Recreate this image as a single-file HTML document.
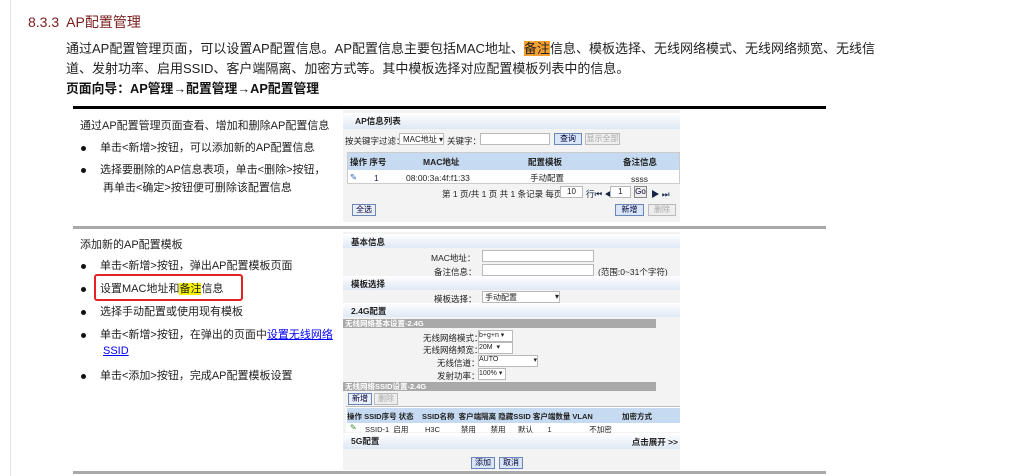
<!DOCTYPE html>
<html><head><meta charset="utf-8"><style>
*{margin:0;padding:0;box-sizing:border-box}
body{width:1016px;height:476px;background:#fff;position:relative;overflow:hidden;font-family:"Liberation Sans","Noto Sans CJK SC",sans-serif;color:#222}
.a{position:absolute;white-space:nowrap}
.t{font-size:11px;color:#222}
.dot{position:absolute;width:5px;height:5px;border-radius:50%;background:#111}
.p{position:absolute;background:#f3f3f3;font-size:8.5px;color:#222}
.hd{position:absolute;left:0;right:0;height:14px;background:linear-gradient(#ffffff,#dfe8f5);font-weight:bold;font-size:8.5px;padding:2px 0 0 8px}
.in{position:absolute;background:#fff;border:1px solid #b9b9b9;height:12px}
.btn{position:absolute;height:12px;border:1px solid #6a87b8;background:#d8e6f8;font-size:8px;text-align:center;line-height:10px;color:#003}
.gb{position:absolute;left:0;width:313px;height:9px;background:#a9a9a9;color:#fff;font-size:7.5px;font-weight:bold;line-height:9px;padding-left:2px}
</style></head><body>
<div class="a" style="left:10px;top:0;width:1px;height:476px;background:#e2e2e2"></div>
<div class="a" style="left:28px;top:12px;font-size:14px;color:#7a1c1c">8.3.3&nbsp; AP配置管理</div>
<div class="a" style="left:66px;top:38px;font-size:13px;color:#222">通过AP配置管理页面，可以设置AP配置信息。AP配置信息主要包括MAC地址、<span style="background:#f5a031">备注</span>信息、模板选择、无线网络模式、无线网络频宽、无线信</div>
<div class="a" style="left:66px;top:58px;font-size:13px;color:#222">道、发射功率、启用SSID、客户端隔离、加密方式等。其中模板选择对应配置模板列表中的信息。</div>
<div class="a" style="left:66px;top:78px;font-size:12.8px;font-weight:bold;color:#111">页面向导：AP管理→配置管理→AP配置管理</div>
<div class="a" style="left:73px;top:106px;width:753px;height:3px;background:#000"></div>
<div class="a" style="left:73px;top:226px;width:753px;height:3px;background:#a9a9a9"></div>
<div class="a" style="left:73px;top:471px;width:753px;height:3px;background:#a9a9a9"></div>

<div class="a t" style="left:80px;top:117px">通过AP配置管理页面查看、增加和删除AP配置信息</div>
<div class="dot" style="left:81px;top:146px"></div><div class="a t" style="left:100px;top:139px">单击&lt;新增&gt;按钮，可以添加新的AP配置信息</div>
<div class="dot" style="left:81px;top:168px"></div><div class="a t" style="left:100px;top:161px">选择要删除的AP信息表项，单击&lt;删除&gt;按钮，</div>
<div class="a t" style="left:103px;top:179px">再单击&lt;确定&gt;按钮便可删除该配置信息</div>

<div class="a t" style="left:80px;top:236px">添加新的AP配置模板</div>
<div class="dot" style="left:81px;top:264px"></div><div class="a t" style="left:100px;top:257px">单击&lt;新增&gt;按钮，弹出AP配置模板页面</div>
<div class="a" style="left:94px;top:274px;width:149px;height:27px;border:2px solid #e52222;border-radius:3px"></div>
<div class="dot" style="left:81px;top:287px"></div><div class="a t" style="left:100px;top:280px">设置MAC地址和<span style="background:#f8f400">备注</span>信息</div>
<div class="dot" style="left:81px;top:310px"></div><div class="a t" style="left:100px;top:303px">选择手动配置或使用现有模板</div>
<div class="dot" style="left:81px;top:333px"></div><div class="a t" style="left:100px;top:326px">单击&lt;新增&gt;按钮，在弹出的页面中<span style="color:#00f;text-decoration:underline">设置无线网络</span></div>
<div class="a t" style="left:103px;top:345px;color:#00f;text-decoration:underline">SSID</div>
<div class="dot" style="left:81px;top:374px"></div><div class="a t" style="left:100px;top:367px">单击&lt;添加&gt;按钮，完成AP配置模板设置</div>

<!-- panel 1 -->
<div class="p" style="left:343px;top:110px;width:337px;height:112px">
 <div class="hd" style="top:3px;height:16px;padding-left:12px">AP信息列表</div>
 <div class="a" style="left:2px;top:25px">按关键字过滤：</div>
 <div class="in" style="left:56px;top:23px;width:45px;font-size:8px;padding-left:3px">MAC地址 ▾</div>
 <div class="a" style="left:104px;top:25px">关键字：</div>
 <div class="in" style="left:137px;top:23px;width:70px"></div>
 <div class="btn" style="left:211px;top:23px;width:28px">查询</div>
 <div class="btn" style="left:242px;top:23px;width:35px;border-color:#bbb;background:#eee;color:#aaa">显示全部</div>
 <div class="a" style="left:4px;top:42px;width:333px;height:32px;background:#fff;border:1px solid #ccc"></div>
 <div class="a" style="left:5px;top:43px;width:331px;height:17px;background:#c6dbf1;font-weight:bold">
  <span class="a" style="left:2px;top:3px">操作 序号</span><span class="a" style="left:75px;top:3px">MAC地址</span><span class="a" style="left:180px;top:3px">配置模板</span><span class="a" style="left:275px;top:3px">备注信息</span></div>
 <div class="a" style="left:7px;top:62px;color:#2a5fb8">✎</div><div class="a" style="left:31px;top:63px;color:#226">1</div>
 <div class="a" style="left:63px;top:63px">08:00:3a:4f:f1:33</div><div class="a" style="left:187px;top:62px">手动配置</div><div class="a" style="left:288px;top:64px">ssss</div>
 <div class="a" style="left:99px;top:78px">第 1 页/共 1 页 共 1 条记录 每页</div>
 <div class="in" style="left:217px;top:76px;width:23px;font-size:8px;text-align:center">10</div>
 <div class="a" style="left:243px;top:78px;color:#124">行⏮ ◀</div>
 <div class="in" style="left:267px;top:76px;width:21px;font-size:8px;text-align:center">1</div>
 <div class="btn" style="left:291px;top:76px;width:13px;background:#eee;border-color:#888">Go</div>
 <div class="a" style="left:308px;top:78px;color:#124">▶ ⏭</div>
 <div class="btn" style="left:9px;top:94px;width:24px;background:#e9eef7">全选</div>
 <div class="btn" style="left:272px;top:94px;width:29px">新增</div>
 <div class="btn" style="left:305px;top:94px;width:28px;border-color:#bbb;background:#eee;color:#aaa">删除</div>
</div>

<!-- panel 2 -->
<div class="p" style="left:343px;top:232px;width:337px;height:238px">
 <div class="hd" style="top:2px">基本信息</div>
 <div class="a" style="left:88px;top:20px">MAC地址：</div><div class="in" style="left:139px;top:18px;width:112px"></div>
 <div class="a" style="left:91px;top:34px">备注信息：</div><div class="in" style="left:139px;top:32px;width:112px"></div>
 <div class="a" style="left:255px;top:34px">(范围:0~31个字符)</div>
 <div class="hd" style="top:44px">模板选择</div>
 <div class="a" style="left:91px;top:61px">模板选择：</div><div class="in" style="left:139px;top:59px;width:78px;font-size:8px;padding-left:2px">手动配置 <span style="float:right">▾</span></div>
 <div class="hd" style="top:71px">2.4G配置</div>
 <div class="gb" style="top:87px">无线网络基本设置-2.4G</div>
 <div class="a" style="left:80px;top:100px">无线网络模式：</div><div class="in" style="left:135px;top:98px;width:35px;font-size:7px">b+g+n ▾</div>
 <div class="a" style="left:80px;top:112px">无线网络频宽：</div><div class="in" style="left:135px;top:110px;width:35px;font-size:7px">20M &nbsp;▾</div>
 <div class="a" style="left:94px;top:125px">无线信道：</div><div class="in" style="left:135px;top:123px;width:60px;font-size:7px">AUTO <span style="float:right">▾</span></div>
 <div class="a" style="left:94px;top:138px">发射功率：</div><div class="in" style="left:135px;top:136px;width:28px;font-size:7px">100% ▾</div>
 <div class="gb" style="top:150px">无线网络SSID设置-2.4G</div>
 <div class="btn" style="left:5px;top:161px;width:24px;background:#e9eef7">新增</div>
 <div class="btn" style="left:31px;top:161px;width:24px;border-color:#bbb;background:#eee;color:#aaa">删除</div>
 <div class="a" style="left:3px;top:174px;width:334px;height:26px;background:#fff;border-top:1px solid #bbb"></div>
 <div class="a" style="left:4px;top:176px;width:333px;height:15px;background:#c6dbf1;font-weight:bold;font-size:7.5px">
  <span class="a" style="left:0;top:3px">操作 SSID序号 状态 &nbsp;&nbsp; SSID名称 &nbsp;客户端隔离 隐藏SSID 客户端数量 VLAN</span><span class="a" style="left:275px;top:3px">加密方式</span></div>
 <div class="a" style="left:7px;top:191px;color:#3a8a2a;font-size:8px">✎</div>
 <div class="a" style="left:22px;top:192px;font-size:7.5px">SSID-1 &nbsp;启用 &nbsp;&nbsp;&nbsp;&nbsp;&nbsp;&nbsp; H3C &nbsp;&nbsp;&nbsp;&nbsp;&nbsp;&nbsp;&nbsp;&nbsp; 禁用 &nbsp;&nbsp;&nbsp;&nbsp;&nbsp; 禁用 &nbsp;&nbsp;&nbsp;&nbsp; 默认 &nbsp;&nbsp;&nbsp;&nbsp;&nbsp; 1 &nbsp;&nbsp;&nbsp;&nbsp;&nbsp;&nbsp;&nbsp;&nbsp;&nbsp;&nbsp;&nbsp;&nbsp;&nbsp;&nbsp;&nbsp;&nbsp; 不加密</div>
 <div class="hd" style="top:201px;height:16px">5G配置<span style="position:absolute;right:2px;top:3px">点击展开 &gt;&gt;</span></div>
 <div class="btn" style="left:128px;top:225px;width:24px">添加</div>
 <div class="btn" style="left:156px;top:225px;width:24px">取消</div>
</div>
</body></html>
